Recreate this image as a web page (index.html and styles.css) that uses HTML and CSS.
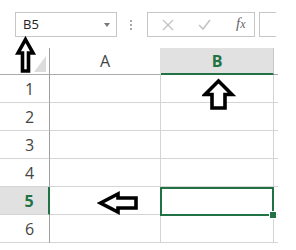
FILE: index.html
```html
<!DOCTYPE html>
<html>
<head>
<meta charset="utf-8">
<link rel="stylesheet" href="styles.css">
</head>
<body>
<div class="app">
  <div class="toolbar">
    <div class="namebox"><span class="ref">B5</span><span class="caret"></span></div>
    <div class="grip"><i></i><i></i><i></i></div>
    <div class="fbtns">
      <svg class="btn" width="12" height="12" viewBox="0 0 12 12"><path d="M1 1L11 11M11 1L1 11" stroke="#c3c3c3" stroke-width="1.4" fill="none"/></svg>
      <svg class="btn" width="13" height="11" viewBox="0 0 13 11"><path d="M1 6L5 10L12 1" stroke="#c3c3c3" stroke-width="1.6" fill="none"/></svg>
      <span class="fx">f<span class="fxx">x</span></span>
    </div>
    <div class="fbar"></div>
  </div>
  <div class="sheet">
    <div class="corner"><span class="tri"></span></div>
    <div class="ch">A</div>
    <div class="ch selcol">B</div>
    <div class="ch rest"></div>

    <div class="rh">1</div><div class="c a"></div><div class="c b"></div><div class="c rest"></div>
    <div class="rh">2</div><div class="c a"></div><div class="c b"></div><div class="c rest"></div>
    <div class="rh">3</div><div class="c a"></div><div class="c b"></div><div class="c rest"></div>
    <div class="rh">4</div><div class="c a"></div><div class="c b"></div><div class="c rest"></div>
    <div class="rh selrow">5</div><div class="c a"></div><div class="c b active"><span class="selbox"><span class="handle"></span></span></div><div class="c rest"></div>
    <div class="rh">6</div><div class="c a"></div><div class="c b"></div><div class="c rest"></div>
  </div>

  <svg class="arrow arrow-name" width="22" height="38" viewBox="0 0 22 38">
    <polygon points="10.5,3.5 18,17 13.5,17 13.5,35 7.5,35 7.5,17 3,17" fill="#fff" stroke="#000" stroke-width="3.6" stroke-linejoin="miter"/>
  </svg>
  <svg class="arrow arrow-col" width="34" height="33" viewBox="0 0 34 33">
    <polygon points="16.5,3 30,16.5 23,16.5 23,30 10,30 10,16.5 3,16.5" fill="#fff" stroke="#000" stroke-width="3.6" stroke-linejoin="miter"/>
  </svg>
  <svg class="arrow arrow-row" width="43" height="26" viewBox="0 0 43 26">
    <polygon points="3.5,13 21,4 21,8 39,8 39,18 21,18 21,22" fill="#fff" stroke="#000" stroke-width="3.6" stroke-linejoin="miter"/>
  </svg>
</div>
</body>
</html>
```
FILE: styles.css
```css
* { box-sizing: border-box; }
html, body { margin: 0; padding: 0; background: #fff; }
body { width: 296px; height: 250px; overflow: hidden; font-family: "Open Sans", "Liberation Sans", sans-serif; }

.app { position: relative; width: 296px; height: 250px; }

.toolbar {
  height: 48px;
  padding: 12px 0 0 15px;
  display: flex;
  align-items: flex-start;
}
.namebox {
  width: 102px;
  height: 25px;
  border: 1px solid #c6c6c6;
  display: flex;
  align-items: center;
  justify-content: space-between;
  padding: 0 6px 0 7px;
}
.ref { font-size: 13px; color: #222; line-height: 1; }
.caret {
  width: 0; height: 0;
  border-left: 3.5px solid transparent;
  border-right: 3.5px solid transparent;
  border-top: 4px solid #7a7a7a;
  margin-top: 1px;
}
.grip {
  margin-left: 13px;
  width: 2px;
  height: 25px;
  display: flex;
  flex-direction: column;
  justify-content: center;
  gap: 2px;
}
.grip i { display: block; width: 2px; height: 2px; background: #a8a8a8; }
.fbtns {
  margin-left: 15px;
  width: 108px;
  height: 25px;
  border: 1px solid #c6c6c6;
  display: flex;
  align-items: center;
  padding-left: 14px;
}
.fbtns .btn:nth-child(2) { margin-left: 24px; }
.fx {
  margin-left: 25px;
  font-family: "Liberation Serif", "DejaVu Serif", serif;
  font-style: italic;
  font-size: 15px;
  color: #666;
  line-height: 1;
  margin-top: -2px;
}
.fxx { font-size: 12px; }
.fbar {
  margin-left: 4px;
  width: 17px;
  height: 25px;
  border: 1px solid #c6c6c6;
  border-right: none;
}

.sheet {
  display: grid;
  grid-template-columns: 50px 111px 113px 4px;
  grid-template-rows: 27px repeat(6, 28px);
  width: 278px;
}
.corner {
  position: relative;
  border-right: 1px solid #9f9f9f;
  border-bottom: 1px solid #ababab;
  display: flex;
  align-items: flex-end;
  justify-content: flex-end;
  padding: 0 3px 2px 0;
}
.tri {
  width: 0; height: 0;
  border-left: 12px solid transparent;
  border-bottom: 16px solid #dcdcdc;
}
.ch {
  border-bottom: 1px solid #ababab;
  border-right: 1px solid #e2e2e2;
  display: flex;
  align-items: center;
  justify-content: center;
  font-size: 16px;
  color: #444;
}
.ch.selcol {
  background: #e1e1e1;
  color: #217346;
  font-weight: 700;
  border-bottom: 2px solid #217346;
  border-right: 1px solid #c8c8c8;
}
.ch.rest { border-right: none; }

.rh {
  border-right: 1px solid #9f9f9f;
  border-bottom: 1px solid #d4d4d4;
  display: flex;
  align-items: center;
  justify-content: center;
  padding-left: 10px;
  font-size: 16px;
  color: #444;
}
.rh.selrow {
  background: #e1e1e1;
  color: #217346;
  font-weight: 700;
  border-right: 2px solid #217346;
}
.c {
  border-right: 1px solid #d4d4d4;
  border-bottom: 1px solid #d4d4d4;
}
.c.rest { border-right: none; }
.c.active { position: relative; }
.selbox {
  position: absolute;
  left: -1px;
  top: 0;
  right: -1px;
  bottom: -2px;
  border: 2px solid #217346;
}
.handle {
  position: absolute;
  right: -4px;
  bottom: -4px;
  width: 6px;
  height: 6px;
  background: #217346;
  outline: 1px solid #fff;
}

.arrow { position: absolute; }
.arrow-name { left: 15px; top: 36px; }
.arrow-col { left: 202px; top: 78px; }
.arrow-row { left: 97px; top: 190px; }
```
